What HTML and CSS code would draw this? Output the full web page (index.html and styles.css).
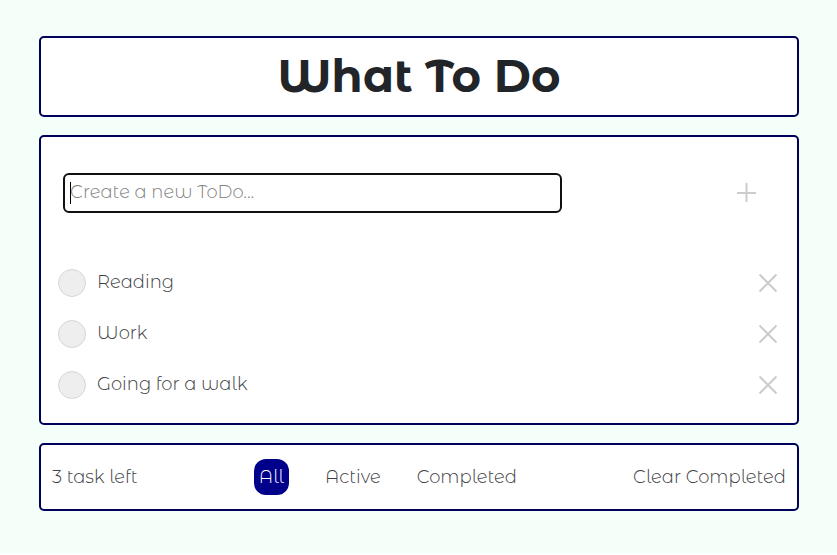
FILE: index.html
```html
<!DOCTYPE html>
<html lang="en">
<head>
<meta charset="utf-8">
<meta name="viewport" content="width=device-width, initial-scale=1">
<title>What To Do</title>
<link rel="stylesheet" href="styles.css">
</head>
<body>
<main class="app">
  <header class="card title-card">
    <h1>What To Do</h1>
  </header>

  <section class="card todo-card">
    <form class="new-todo">
      <div class="field">
        <input class="new-input" type="text" placeholder="Create a new ToDo..." aria-label="Create a new ToDo">
        <span class="caret"></span>
      </div>
      <button class="icon-button" type="button" aria-label="Add">
        <svg width="20" height="20" viewBox="0 0 20 20"><path d="M10.500 0v19M1 10h19"/></svg>
      </button>
    </form>

    <ul class="todos">
      <li class="todo">
        <label class="todo-label"><input class="check" type="checkbox"><span>Reading</span></label>
        <button class="icon-button" type="button" aria-label="Delete Reading">
          <svg width="20" height="20" viewBox="0 0 20 20"><path d="M1.5 1.5l17 17M18.500 1.500l-17 17"/></svg>
        </button>
      </li>
      <li class="todo">
        <label class="todo-label"><input class="check" type="checkbox"><span>Work</span></label>
        <button class="icon-button" type="button" aria-label="Delete Work">
          <svg width="20" height="20" viewBox="0 0 20 20"><path d="M1.5 1.5l17 17M18.500 1.500l-17 17"/></svg>
        </button>
      </li>
      <li class="todo">
        <label class="todo-label"><input class="check" type="checkbox"><span>Going for a walk</span></label>
        <button class="icon-button" type="button" aria-label="Delete Going for a walk">
          <svg width="20" height="20" viewBox="0 0 20 20"><path d="M1.5 1.5l17 17M18.500 1.500l-17 17"/></svg>
        </button>
      </li>
    </ul>
  </section>

  <footer class="card footer-card">
    <span>3 task left</span>
    <nav class="filters">
      <button class="text-button active" type="button">All</button>
      <button class="text-button" type="button">Active</button>
      <button class="text-button" type="button">Completed</button>
    </nav>
    <button class="text-button" type="button">Clear Completed</button>
  </footer>
</main>
</body>
</html>
```
FILE: styles.css
```css
* {
  box-sizing: border-box;
}

html {
  background: #fff;
}

body {
  margin: 0;
  color: #3c4044;
  font: 300 18px/24px "Montserrat Alternates", Inter, sans-serif;
}

.app {
  display: flex;
  flex-direction: column;
  gap: 18px;
  padding: 36px 38px 42px 39px;
  background: #f5fffa;
}

.card {
  background: #fff;
  border: 2px solid #00005a;
  border-radius: 5px;
}

.title-card {
  padding: 8px 16px 9px;
}

h1 {
  margin: 0;
  color: #212529;
  font-size: 45px;
  font-weight: 700;
  line-height: 60px;
  text-align: center;
}

.todo-card {
  padding: 36px 16px 13px;
}

.new-todo {
  display: flex;
  align-items: center;
  justify-content: space-between;
  margin-bottom: 44px;
  padding: 0 25px 0 6px;
}

.field {
  position: relative;
  width: 72%;
}

.new-input {
  display: block;
  width: 100%;
  height: 40px;
  padding: 0 5px 2px;
  border: 2px solid #101010;
  border-radius: 6px;
  outline: none;
  background: #fff;
  color: inherit;
  font: inherit;
}

.new-input::placeholder {
  color: #808080;
  opacity: 1;
}

.caret {
  position: absolute;
  top: 9px;
  left: 7px;
  width: 1px;
  height: 22px;
  background: #000;
}

.icon-button {
  display: flex;
  padding: 0;
  border: 0;
  background: none;
}

.icon-button svg {
  fill: none;
  stroke: #ccc;
  stroke-width: 2;
}

.todos {
  display: grid;
  margin: 0;
  padding: 0;
  list-style: none;
}

.todo {
  display: flex;
  align-items: center;
  justify-content: space-between;
  height: 51px;
  padding: 0 3px 0 1px;
}

.todo-label {
  display: flex;
  align-items: center;
  gap: 11px;
}

.todo-label span {
  padding-bottom: 2px;
}

.check {
  width: 28px;
  height: 28px;
  margin: 0;
  appearance: none;
  border: 1px solid #d6d6d6;
  border-radius: 50%;
  background: #eee;
}

.footer-card {
  display: flex;
  justify-content: space-between;
  align-items: center;
  padding: 14px 11px;
}

.filters {
  display: flex;
  gap: 36px;
}

.text-button {
  height: 36px;
  padding: 0;
  border: 0;
  border-radius: 12px;
  background: none;
  color: inherit;
  font: inherit;
}

.active {
  padding: 0 5px;
  background: #00008b;
  color: #fff;
}
```
